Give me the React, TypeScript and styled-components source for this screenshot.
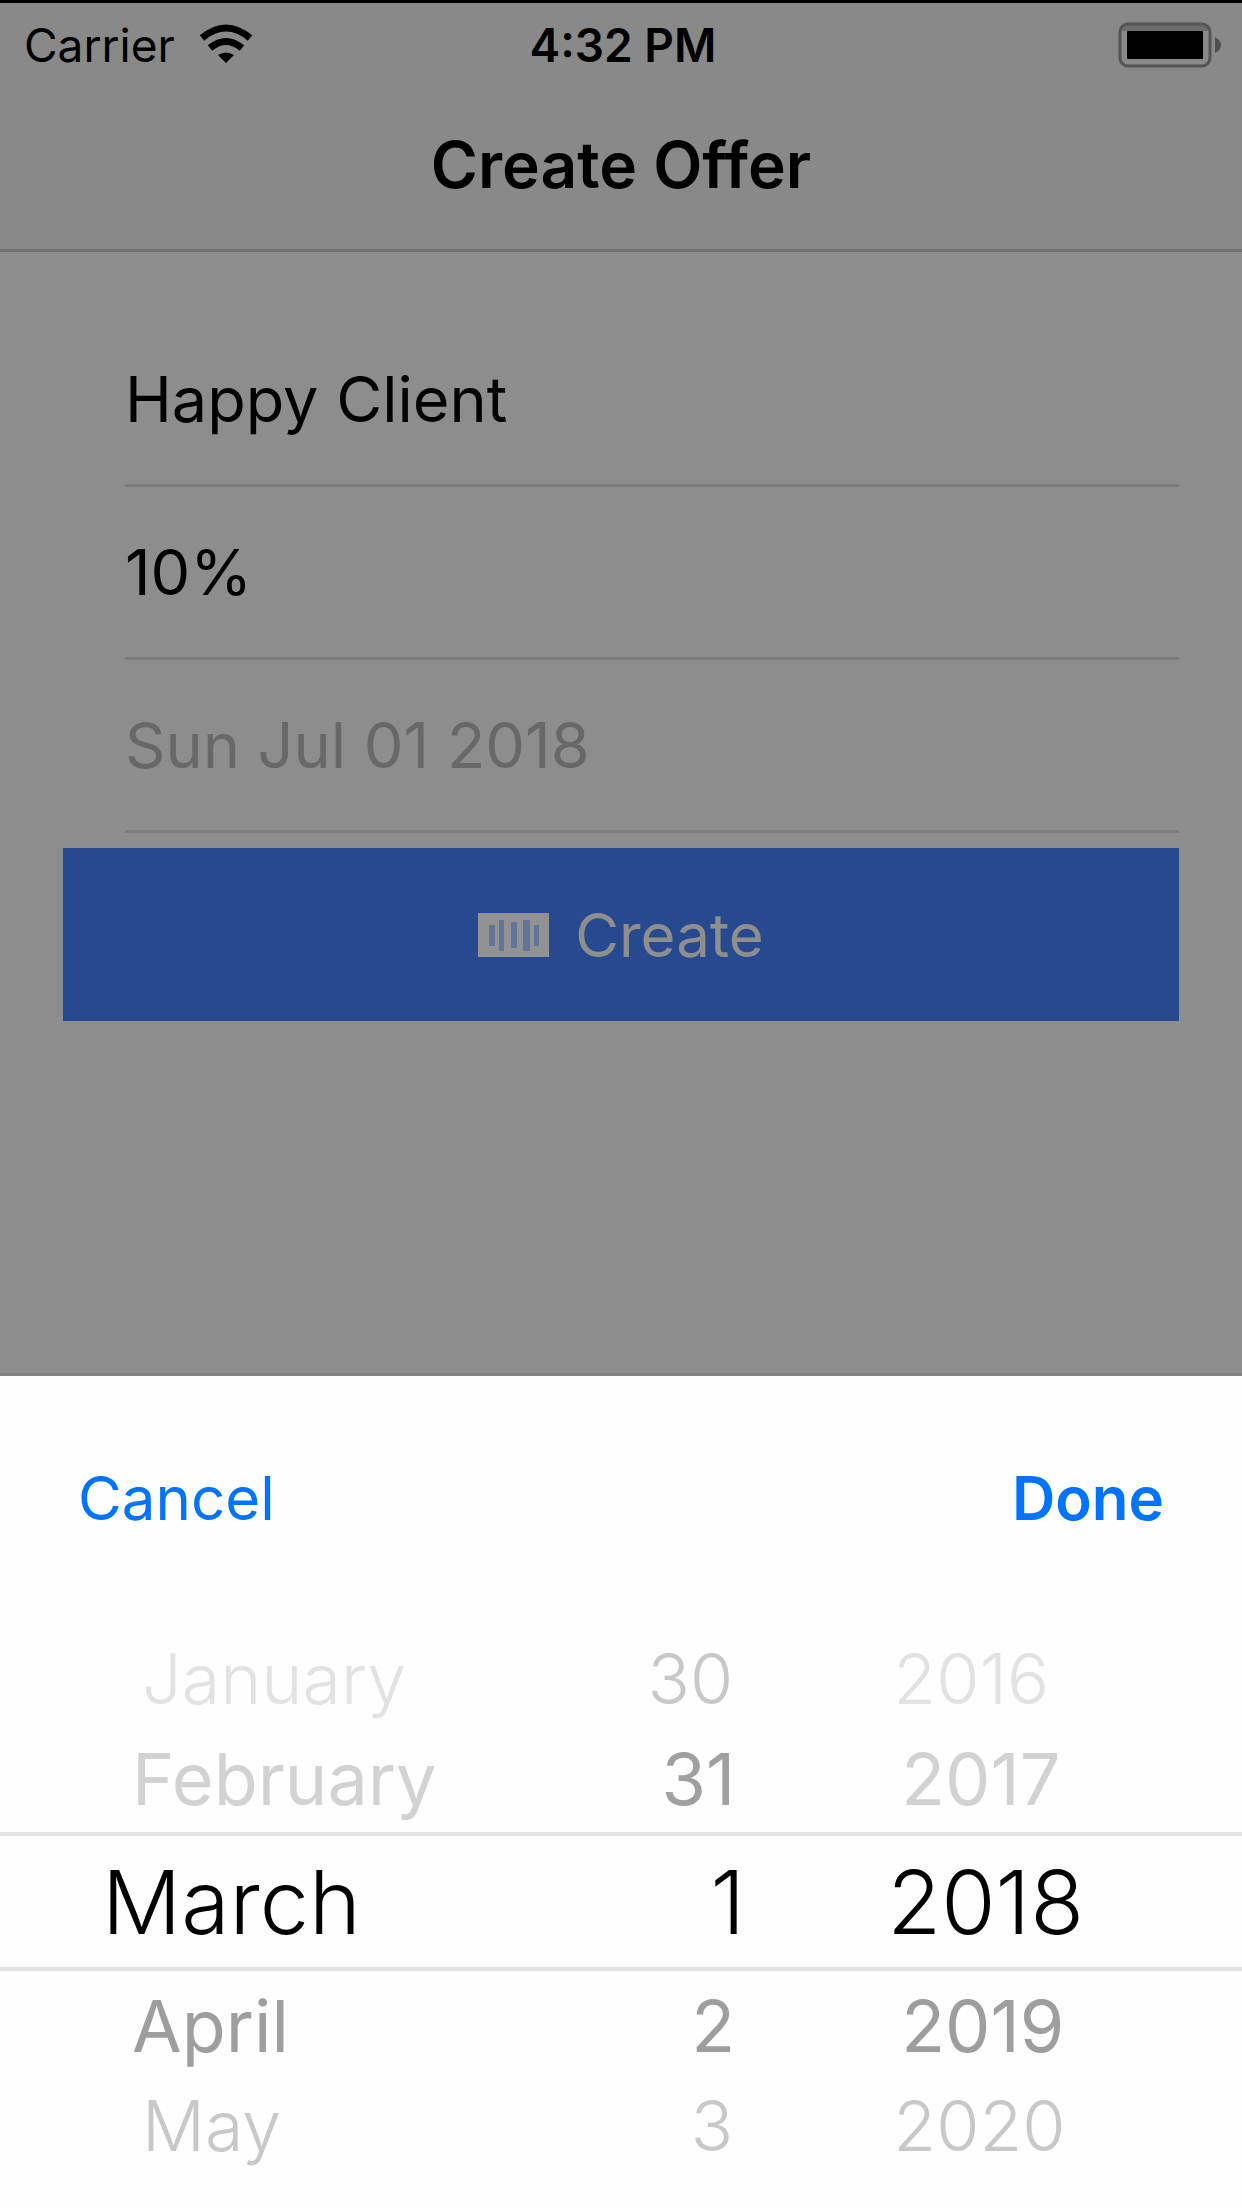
import React, { useState } from "react";
import styled, { createGlobalStyle } from "styled-components";

const GlobalStyle = createGlobalStyle`
  *, *::before, *::after { box-sizing: border-box; }
  html, body { margin: 0; background: #8d8d8d; }
  body, button, input { font-family: Inter, Roboto, "Liberation Sans", sans-serif; }
`;

const Screen = styled.div`
  display: flex;
  flex-direction: column;
  min-height: 100vh;
`;

const Header = styled.header`
  background: #898989;
  border-top: 3px solid #000;
  border-bottom: 3px solid #707070;
  padding-bottom: 6px;
  color: #000;
`;

const StatusBar = styled.div`
  display: grid;
  grid-template-columns: 1fr auto 1fr;
  align-items: center;
  height: 84px;
  padding: 0 20px 0 24px;
  font-size: 46px;
  line-height: 56px;
`;

const Carrier = styled.div`
  display: flex;
  align-items: center;
  gap: 24px;
`;

const Clock = styled.time`
  font-weight: 600;
`;

const BatteryIcon = styled.svg`
  justify-self: end;
`;

const Title = styled.h1`
  margin: 0;
  font-size: 64px;
  font-weight: 600;
  line-height: 156px;
  text-align: center;
`;

const Form = styled.form`
  flex: 1;
  display: flex;
  flex-direction: column;
  padding: 62px 63px 0;
  border-bottom: 3px solid #828282;
`;

const Field = styled.input`
  height: 173px;
  margin: 0 0 0 62px;
  padding: 0;
  border: 0;
  border-bottom: 3px solid #7c7c7c;
  border-radius: 0;
  outline: 0;
  background: transparent;
  color: #000;
  font-size: 63px;
  &::placeholder { color: #686868; opacity: 1; }
`;

const CreateButton = styled.button`
  display: flex;
  align-items: center;
  justify-content: center;
  gap: 26px;
  height: 173px;
  margin: 15px 0 0;
  padding: 0;
  border: 0;
  background: #26498f;
  color: #8e8e8e;
  font-size: 60px;
`;

const Sheet = styled.section`
  background: #fefefe;
  padding-bottom: 37px;
`;

const Toolbar = styled.div`
  display: flex;
  align-items: center;
  justify-content: space-between;
  height: 243px;
  margin-bottom: 13px;
  padding: 0 78px;
`;

const ToolbarButton = styled.button<{ $strong?: boolean }>`
  padding: 0;
  border: 0;
  background: none;
  color: #0073ff;
  font-size: 60px;
  font-weight: ${(p) => (p.$strong ? 600 : 400)};
`;

const Wheels = styled.div`
  display: grid;
  grid-template-columns: 45fr 15fr 40fr;
`;

const Wheel = styled.div<{ $align: "left" | "right" }>`
  display: flex;
  flex-direction: column;
  text-align: ${(p) => p.$align};
`;

type Distance = 0 | 1 | 2;
const rowHeight = { 0: 139, 1: 108, 2: 92 };
const rowFont = { 0: 88, 1: 72, 2: 70 };
const rowWeight = { 0: 300, 1: 400, 2: 300 };

const Option = styled.div<{ $distance: Distance; $tone: string; $start: number; $end: number }>`
  display: flex;
  align-items: center;
  height: ${(p) => rowHeight[p.$distance]}px;
  padding: 0 ${(p) => p.$end}px 0 ${(p) => p.$start}px;
  border: solid #e2e2e2;
  border-width: ${(p) => (p.$distance === 0 ? "4px 0" : "0")};
  color: ${(p) => p.$tone};
  font-size: ${(p) => rowFont[p.$distance]}px;
  font-weight: ${(p) => rowWeight[p.$distance]};
  white-space: nowrap;
`;

const OptionText = styled.span`
  flex: 1;
`;

const WifiIcon = () => (
  <svg width="54" height="42" viewBox="0 0 54 42" aria-hidden="true">
    <path d="M3 14Q27-6 51 14" fill="none" stroke="#000" strokeWidth="7" />
    <path d="M11 24Q27 11 43 24" fill="none" stroke="#000" strokeWidth="7" />
    <path d="M19 31Q27 26 35 31L27 39Z" fill="#000" />
  </svg>
);

const BarcodeIcon = () => (
  <svg width="71" height="44" viewBox="0 0 71 44" aria-hidden="true">
    <rect width="71" height="44" fill="#929292" />
    <g fill="#62749a">
      <rect x="11" y="12" width="6" height="21" />
      <rect x="21" y="7" width="5" height="31" />
      <rect x="33" y="9" width="6" height="26" />
      <rect x="45" y="7" width="7" height="31" />
      <rect x="56" y="12" width="5" height="21" />
    </g>
  </svg>
);

interface WheelSpec {
  label: string;
  align: "left" | "right";
  options: string[];
  starts: number[];
  ends: number[];
  tones: string[];
}

const wheels: WheelSpec[] = [
  {
    label: "Month",
    align: "left",
    options: ["January", "February", "March", "April", "May"],
    starts: [102, 132, 142],
    ends: [0, 0, 0],
    tones: ["#e2e2e2", "#d2d2d2", "#000", "#9e9e9e", "#c8c8c8"],
  },
  {
    label: "Day",
    align: "right",
    options: ["30", "31", "1", "2", "3"],
    starts: [0, 0, 0],
    ends: [0, 10, 12],
    tones: ["#c8c8c8", "#a0a0a0", "#000", "#9e9e9e", "#c8c8c8"],
  },
  {
    label: "Year",
    align: "left",
    options: ["2016", "2017", "2018", "2019", "2020"],
    starts: [142, 156, 148],
    ends: [0, 0, 0],
    tones: ["#e2e2e2", "#d2d2d2", "#000", "#9e9e9e", "#c8c8c8"],
  },
];

export default function App() {
  const [client, setClient] = useState("Happy Client");
  const [discount, setDiscount] = useState("10%");

  return (
    <Screen>
      <GlobalStyle />
      <Header>
        <StatusBar>
          <Carrier>
            Carrier
            <WifiIcon />
          </Carrier>
          <Clock>4:32 PM</Clock>
          <BatteryIcon width="104" height="46" viewBox="0 0 104 46" aria-hidden="true">
            <path d="M9 2H84Q90 3 91 9H2Q3 3 9 2Z" fill="#6c6c6c" />
            <rect x="2" y="2" width="90" height="42" rx="8" fill="none" stroke="#555" strokeWidth="3" />
            <rect x="9" y="9" width="76" height="28" rx="1" fill="#000" />
            <path d="M97 15Q103 18 103 23T97 31Z" fill="#505050" />
          </BatteryIcon>
        </StatusBar>
        <Title>Create Offer</Title>
      </Header>
      <Form onSubmit={(e) => e.preventDefault()}>
        <Field aria-label="Client" value={client} onChange={(e) => setClient(e.target.value)} />
        <Field aria-label="Discount" value={discount} onChange={(e) => setDiscount(e.target.value)} />
        <Field aria-label="Date" placeholder="Sun Jul 01 2018" readOnly />
        <CreateButton type="submit">
          <BarcodeIcon />
          Create
        </CreateButton>
      </Form>
      <Sheet aria-label="Choose a date">
        <Toolbar>
          <ToolbarButton type="button">Cancel</ToolbarButton>
          <ToolbarButton type="button" $strong>Done</ToolbarButton>
        </Toolbar>
        <Wheels>
          {wheels.map((wheel) => (
            <Wheel key={wheel.label} role="listbox" aria-label={wheel.label} $align={wheel.align}>
              {wheel.options.map((text, i) => {
                const distance = Math.abs(i - 2) as Distance;
                return (
                  <Option
                    key={text}
                    role="option"
                    aria-selected={distance === 0}
                    $distance={distance}
                    $tone={wheel.tones[i]}
                    $start={wheel.starts[distance]}
                    $end={wheel.ends[distance]}
                  >
                    <OptionText>{text}</OptionText>
                  </Option>
                );
              })}
            </Wheel>
          ))}
        </Wheels>
      </Sheet>
    </Screen>
  );
}
